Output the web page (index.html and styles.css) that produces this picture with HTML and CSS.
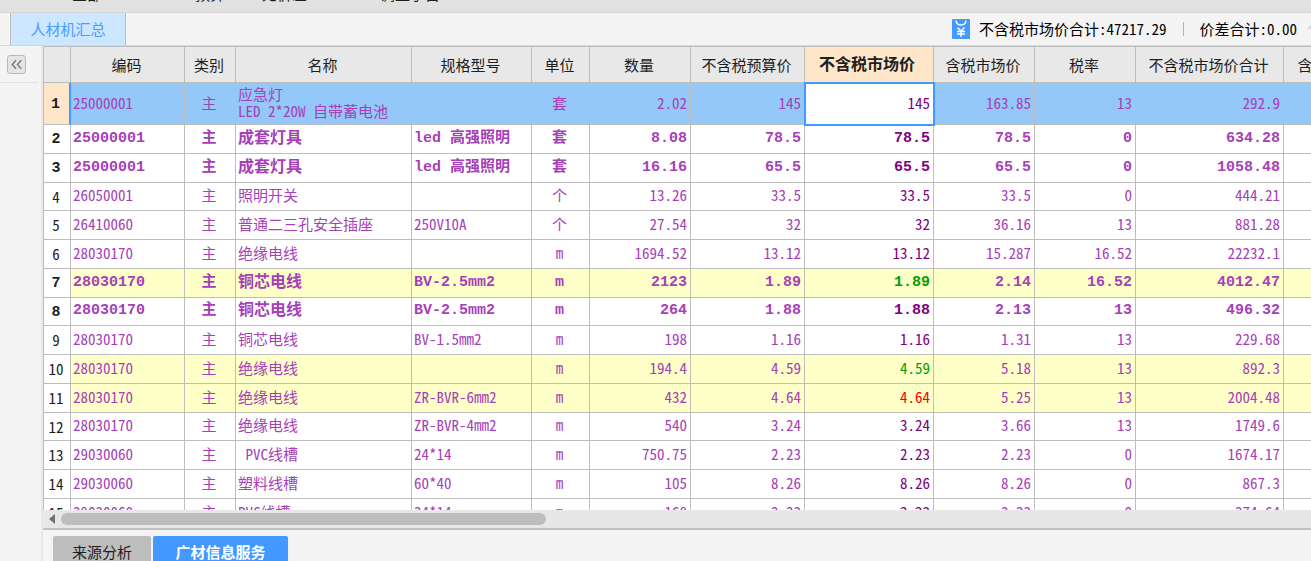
FILE: index.html
```html
<!DOCTYPE html>
<html lang="zh-CN">
<head>
<meta charset="utf-8">
<title>人材机汇总</title>
<link rel="stylesheet" href="styles.css">
</head>
<body>
<nav class="tree-strip">
  <span class="strip-item item-a">全部</span>
  <span class="strip-item item-b">预算</span>
  <span class="strip-item item-c">无价差</span>
  <span class="strip-item item-d">调整子目</span>
</nav>
<header class="tab-bar">
  <button class="page-tab" type="button">人材机汇总</button>
  <div class="totals">
    <svg class="yen" viewBox="0 0 18 20" aria-hidden="true">
      <rect width="18" height="20" rx="1" fill="#4399ff"/>
      <path d="M4 1.500 Q4.500 6 9 6 Q13.500 6 14 1.500" fill="none" stroke="#fff" stroke-width="1.500"/>
      <path d="M5.500 8.500 L9 12 L12.500 8.500 M9 12 V18 M5 12.500 H13 M5 15 H13" fill="none" stroke="#fff" stroke-width="1.400"/>
    </svg>
    <span>不含税市场价合计:47217.29</span>
    <i class="divider"></i>
    <span>价差合计:0.00</span>
    <svg class="up" viewBox="0 0 14 16" aria-hidden="true"><path d="M0 8 L7 0 L14 8 H10 V16 H4 V8 Z" fill="#d8d8d8"/></svg>
  </div>
</header>
<main class="workspace">
  <aside class="side">
    <button class="collapse" type="button" aria-label="收起">
      <svg viewBox="0 0 18 18" aria-hidden="true"><path d="M8.500 4.500 L4.500 9 L8.500 13.500 M14 4.500 L10 9 L14 13.500" fill="none" stroke="#777" stroke-width="1.500"/></svg>
    </button>
  </aside>
  <section class="content">
    <div class="grid-area">
      <table class="grid">
        <colgroup>
          <col class="c-no"><col class="c-code"><col class="c-kind"><col class="c-name"><col class="c-spec"><col class="c-unit"><col class="c-qty"><col class="c-budget"><col class="c-market"><col class="c-taxed"><col class="c-rate"><col class="c-total"><col class="c-last">
        </colgroup>
        <thead>
          <tr><th></th><th>编码</th><th>类别</th><th>名称</th><th>规格型号</th><th>单位</th><th>数量</th><th>不含税预算价</th><th class="active">不含税市场价</th><th>含税市场价</th><th>税率</th><th>不含税市场价合计</th><th>含税市场价合计</th></tr>
        </thead>
        <tbody id="rows"></tbody>
      </table>
    </div>
    <div class="scrollbar">
      <svg class="arrow" viewBox="0 0 6 10" aria-hidden="true"><path d="M6 0 V10 L0 5 Z" fill="#707078"/></svg>
      <div class="thumb"></div>
    </div>
    <footer class="bottom-tabs">
      <button class="bottom-tab" type="button">来源分析</button>
      <button class="bottom-tab current" type="button">广材信息服务</button>
    </footer>
  </section>
</main>
<script src="rows.js"></script>
</body>
</html>
```
FILE: rows.js
```js
// code, name, spec, unit, quantity, budget, market, taxed, rate, total, row classes
const rows = [
  ["25000001", "应急灯\nLED 2*20W 自带蓄电池", "", "套", "2.02", "145", "145", "163.85", "13", "292.9", "selected"],
  ["25000001", "成套灯具", "led 高强照明", "套", "8.08", "78.5", "78.5", "78.5", "0", "634.28", "strong"],
  ["25000001", "成套灯具", "led 高强照明", "套", "16.16", "65.5", "65.5", "65.5", "0", "1058.48", "strong"],
  ["26050001", "照明开关", "", "个", "13.26", "33.5", "33.5", "33.5", "0", "444.21", ""],
  ["26410060", "普通二三孔安全插座", "250V10A", "个", "27.54", "32", "32", "36.16", "13", "881.28", ""],
  ["28030170", "绝缘电线", "", "m", "1694.52", "13.12", "13.12", "15.287", "16.52", "22232.1", ""],
  ["28030170", "铜芯电线", "BV-2.5mm2", "m", "2123", "1.89", "1.89", "2.14", "16.52", "4012.47", "strong marked lower"],
  ["28030170", "铜芯电线", "BV-2.5mm2", "m", "264", "1.88", "1.88", "2.13", "13", "496.32", "strong"],
  ["28030170", "铜芯电线", "BV-1.5mm2", "m", "198", "1.16", "1.16", "1.31", "13", "229.68", ""],
  ["28030170", "绝缘电线", "", "m", "194.4", "4.59", "4.59", "5.18", "13", "892.3", "marked lower"],
  ["28030170", "绝缘电线", "ZR-BVR-6mm2", "m", "432", "4.64", "4.64", "5.25", "13", "2004.48", "marked higher"],
  ["28030170", "绝缘电线", "ZR-BVR-4mm2", "m", "540", "3.24", "3.24", "3.66", "13", "1749.6", ""],
  ["29030060", " PVC线槽", "24*14", "m", "750.75", "2.23", "2.23", "2.23", "0", "1674.17", ""],
  ["29030060", "塑料线槽", "60*40", "m", "105", "8.26", "8.26", "8.26", "0", "867.3", ""],
  ["29030060", "PVC线槽", "24*14", "m", "168", "2.23", "2.23", "2.23", "0", "374.64", ""]
];
const kinds = ["text", "kind", "name", "text", "unit", "num", "num", "num market", "num", "num", "num", "num"];
const body = document.getElementById("rows");
rows.forEach((row, i) => {
  const tr = document.createElement("tr");
  tr.className = row[10];
  const no = document.createElement("th");
  no.scope = "row";
  no.textContent = i + 1;
  tr.append(no);
  const cells = [row[0], "主", ...row.slice(1, 10), ""];
  cells.forEach((value, j) => {
    const td = document.createElement("td");
    td.className = kinds[j];
    td.textContent = value;
    tr.append(td);
  });
  body.append(tr);
});
```
FILE: styles.css
```css
* { box-sizing: border-box; }
html, body { height: 100%; }
body {
  margin: 0;
  display: flex;
  flex-direction: column;
  overflow: hidden;
  background: #f4f4f4;
  color: #1e1e1e;
  font: 15px/20px "Noto Sans Mono CJK SC", "Noto Sans CJK SC", sans-serif;
}
button { font: inherit; border: 0; padding: 0; }
.tree-strip {
  flex: none;
  display: flex;
  align-items: flex-end;
  height: 12px;
  padding-left: 72px;
  background: #e1e1e1;
  overflow: hidden;
}
.strip-item { flex: none; height: 28px; line-height: 20px; }
.item-a { width: 123px; }
.item-b { width: 67px; }
.item-c { width: 118px; }
.tab-bar {
  flex: none;
  display: flex;
  height: 34px;
  padding-left: 10px;
  border-top: 1px solid #d6d6d6;
  border-bottom: 1px solid #d6d6d6;
}
.page-tab {
  width: 116px;
  background: #cce7ff;
  color: #4a9cff;
  border-left: 1px solid #bcbcbc;
  border-right: 1px solid #bcbcbc;
}
.totals {
  flex: 1;
  display: flex;
  align-items: center;
  justify-content: flex-end;
  white-space: nowrap;
  color: #000;
  overflow: hidden;
}
.yen { width: 18px; height: 20px; margin-right: 9px; }
.divider { width: 1px; height: 14px; margin: 0 15px 0 17px; background: #9db8d8; }
.up { width: 14px; height: 16px; margin: 0 -10px 0 10px; }
.workspace { flex: 1; min-height: 0; display: flex; }
.side { flex: none; width: 43px; border-right: 2px solid #e8e8e8; }
.collapse {
  display: block;
  width: 19px;
  height: 19px;
  margin: 9px 0 0 7px;
  border: 1px solid #b8b8b8;
  border-radius: 3px;
  background: #e4e4e4;
}
.collapse svg { display: block; width: 17px; height: 17px; }
.side::after { content: ""; display: block; width: 38px; margin-top: 8px; border-top: 1px solid #e2e2e2; }
.content { flex: 1; min-width: 0; display: flex; flex-direction: column; }
.grid-area {
  flex: 1;
  min-height: 0;
  overflow: hidden;
  background: #fff;
  border-top: 1px solid #bdbdbd;
  border-left: 1px solid #bdbdbd;
}
.grid { width: 1375px; table-layout: fixed; border-collapse: separate; border-spacing: 0; }
.c-no { width: 27px; }
.c-code { width: 114px; }
.c-kind { width: 51px; }
.c-name { width: 176px; }
.c-spec { width: 120px; }
.c-unit { width: 58px; }
.c-qty { width: 101px; }
.c-budget { width: 114px; }
.c-market { width: 129px; }
.c-taxed { width: 101px; }
.c-rate { width: 101px; }
.c-total { width: 148px; }
.c-last { width: 135px; }
.grid th, .grid td {
  padding: 0 2px 3px 2px;
  border-right: 1px solid #bdbdbd;
  border-bottom: 1px solid #bdbdbd;
  white-space: pre;
  overflow: hidden;
}
.grid thead th { height: 36px; padding: 0 2px 0 0; background: #e8e8e8; font-weight: 400; }
.grid thead .active { padding: 0 4px 3px 0; background: #ffe6c8; font-weight: 700; font-size: 16px; }
.grid tbody tr { height: 29px; color: #a63fb8; }
.grid tbody tr:nth-child(4n) { height: 28px; }
.grid tbody tr.selected { height: 42px; background: #93c8f8; line-height: 17px; }
.grid tbody th { color: #1e1e1e; font-weight: 400; padding: 0 2px 0 0; }
.grid .selected th { background: #ffe6c8; border-right: 2px solid #4399ff; }
.grid .selected th, .grid .strong th { padding-top: 2px; font: 700 15px/20px "Liberation Mono", monospace; }
.grid .strong td { padding-bottom: 1px; font: 700 15px/20px "Liberation Mono", "Noto Sans CJK SC", sans-serif; }
.grid .strong .name { font-size: 16px; }
.grid td.kind, .grid td.unit { padding-right: 4px; text-align: center; }
.grid td.num { padding-right: 3px; text-align: right; }
.grid .market { color: #800080; }
.grid .selected .market { background: #fff; outline: 2px solid #4399ff; outline-offset: -1px; }
.grid .marked td { background: #ffffc8; }
.grid .lower .market { color: #00a000; }
.grid .higher .market { color: #f00; }
.scrollbar {
  flex: none;
  display: flex;
  align-items: center;
  height: 20px;
  padding-left: 6px;
  background: #e7e7e7;
  border-bottom: 2px solid #c0c0c0;
}
.arrow { width: 6px; height: 10px; margin-right: 6px; }
.thumb { width: 485px; height: 12px; border-radius: 6px; background: #bdbdbd; }
.bottom-tabs { flex: none; display: flex; gap: 2px; height: 31px; padding: 6px 0 0 10px; overflow: hidden; }
.bottom-tab { height: 32px; width: 98px; border-radius: 2px; background: #bdbdbd; color: #1e1e1e; }
.bottom-tab.current { width: 135px; background: #4399ff; color: #fff; font-weight: 700; }
```
